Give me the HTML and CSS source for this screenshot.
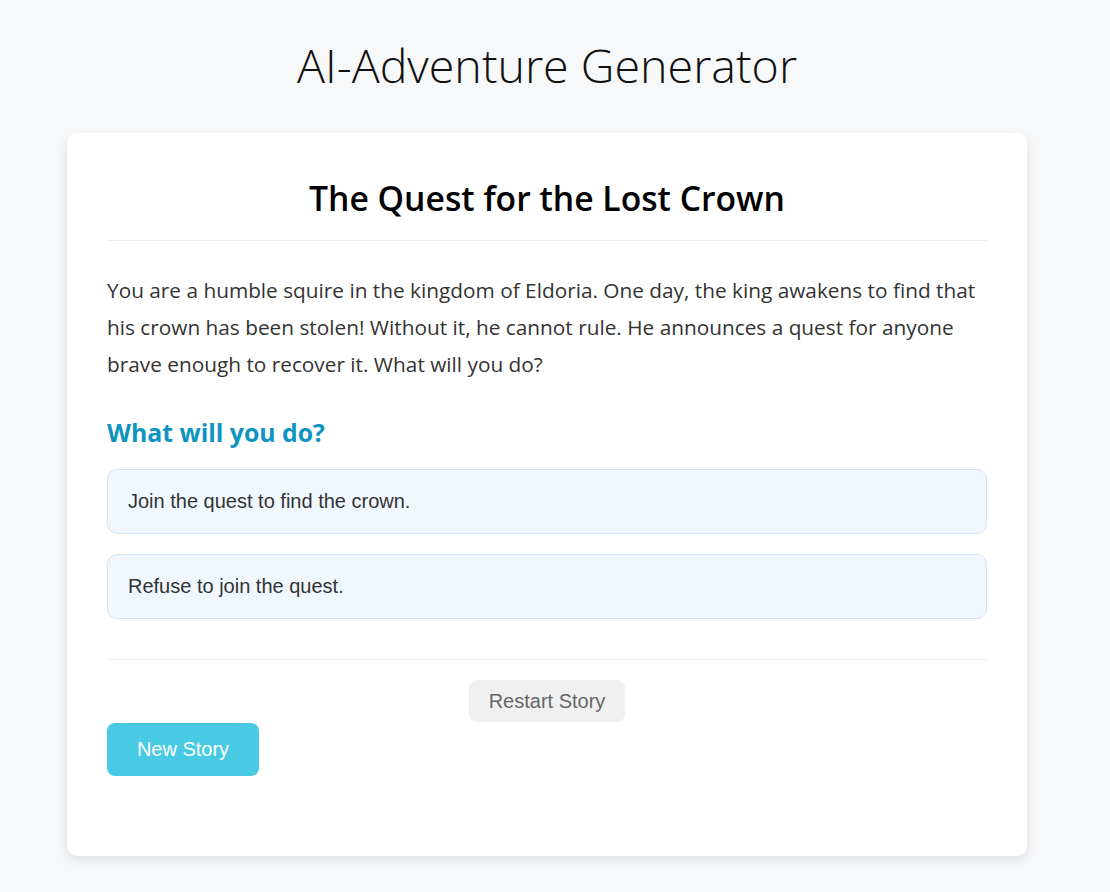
FILE: index.html
```html
<!DOCTYPE html>
<html lang="en">
<head>
<meta charset="utf-8">
<title>AI-Adventure Generator</title>
<link rel="stylesheet" href="styles.css">
</head>
<body>
<h1 class="app-title">AI-Adventure Generator</h1>
<main class="card">
  <h2 class="story-title">The Quest for the Lost Crown</h2>
  <p class="story-text">You are a humble squire in the kingdom of Eldoria. One day, the king awakens to find that his crown has been stolen! Without it, he cannot rule. He announces a quest for anyone brave enough to recover it. What will you do?</p>
  <h3 class="prompt">What will you do?</h3>
  <div class="choices">
    <button class="choice">Join the quest to find the crown.</button>
    <button class="choice">Refuse to join the quest.</button>
  </div>
  <div class="controls">
    <button class="restart">Restart Story</button>
  </div>
  <button class="new-story">New Story</button>
</main>
</body>
</html>
```

FILE: styles.css
```css
* { box-sizing: border-box; }
html, body { margin: 0; padding: 0; }
body {
  background: #f7f8fa;
  font-family: "Open Sans", "Noto Sans", sans-serif;
  color: #333;
  padding: 27px 16px 36px 0;
}
.app-title {
  margin: 0 0 30px;
  text-align: center;
  font-weight: 300;
  font-size: 46.6px;
  line-height: 76px;
  color: #111;
}
.card {
  width: 960px;
  margin: 0 auto;
  background: #fff;
  border-radius: 10px;
  box-shadow: 0 4px 12px rgba(0,0,0,0.1);
  padding: 40px 40px 80px;
}
.story-title {
  margin: 0;
  text-align: center;
  font-size: 33.7px;
  font-weight: 600;
  color: #000;
  line-height: 50px;
  padding-bottom: 17px;
  border-bottom: 1px solid #eee;
}
.story-text {
  margin: 31px 0 0;
  font-size: 20.8px;
  line-height: 37px;
  color: #333;
}
.prompt {
  margin: 33px 0 0;
  font-size: 24.8px;
  font-weight: 700;
  color: #0e94c0;
  line-height: 32px;
}
.choices {
  display: flex;
  flex-direction: column;
  gap: 20px;
  margin-top: 21px;
}
.choice {
  display: block;
  width: 100%;
  height: 65px;
  text-align: left;
  padding: 0 20px;
  background: #f0f7ff;
  border: 1px solid #d3e2f6;
  border-radius: 10px;
  font-family: "Liberation Sans", Arial, sans-serif;
  font-size: 20px;
  color: #333;
}
.controls {
  margin-top: 40px;
  border-top: 1px solid #eee;
  padding-top: 20px;
  display: flex;
  justify-content: center;
}
.restart {
  width: 156px;
  height: 42px;
  border: none;
  border-radius: 8px;
  background: #f0f0f0;
  color: #666;
  font-family: "Liberation Sans", Arial, sans-serif;
  font-size: 20px;
}
.new-story {
  display: block;
  margin-top: 1px;
  width: 152px;
  height: 53px;
  border: none;
  border-radius: 8px;
  background: #48cae4;
  color: #fff;
  font-family: "Liberation Sans", Arial, sans-serif;
  font-size: 20px;
}
```
